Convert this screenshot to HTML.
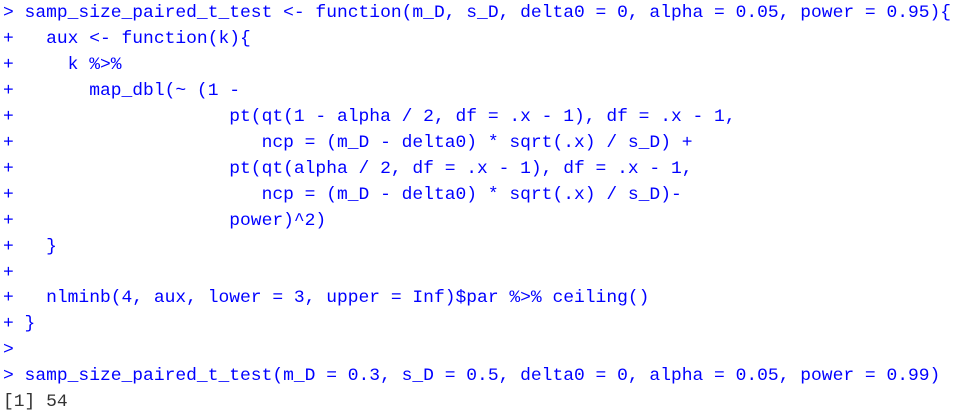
<!DOCTYPE html>
<html><head><meta charset="utf-8"><style>
html,body{margin:0;padding:0;background:#fff;width:958px;height:415px;overflow:hidden}
pre{margin:0;position:absolute;left:3px;top:1px;font-family:"Liberation Mono",monospace;font-size:17.97px;line-height:25.95px;color:#0000ff}
.o{color:#333}
</style></head><body><pre>&gt; samp_size_paired_t_test &lt;- function(m_D, s_D, delta0 = 0, alpha = 0.05, power = 0.95){
+   aux &lt;- function(k){
+     k %&gt;%
+       map_dbl(~ (1 -
+                    pt(qt(1 - alpha / 2, df = .x - 1), df = .x - 1,
+                       ncp = (m_D - delta0) * sqrt(.x) / s_D) +
+                    pt(qt(alpha / 2, df = .x - 1), df = .x - 1,
+                       ncp = (m_D - delta0) * sqrt(.x) / s_D)-
+                    power)^2)
+   }
+
+   nlminb(4, aux, lower = 3, upper = Inf)$par %&gt;% ceiling()
+ }
&gt;
&gt; samp_size_paired_t_test(m_D = 0.3, s_D = 0.5, delta0 = 0, alpha = 0.05, power = 0.99)
<span class="o">[1] 54</span></pre></body></html>
